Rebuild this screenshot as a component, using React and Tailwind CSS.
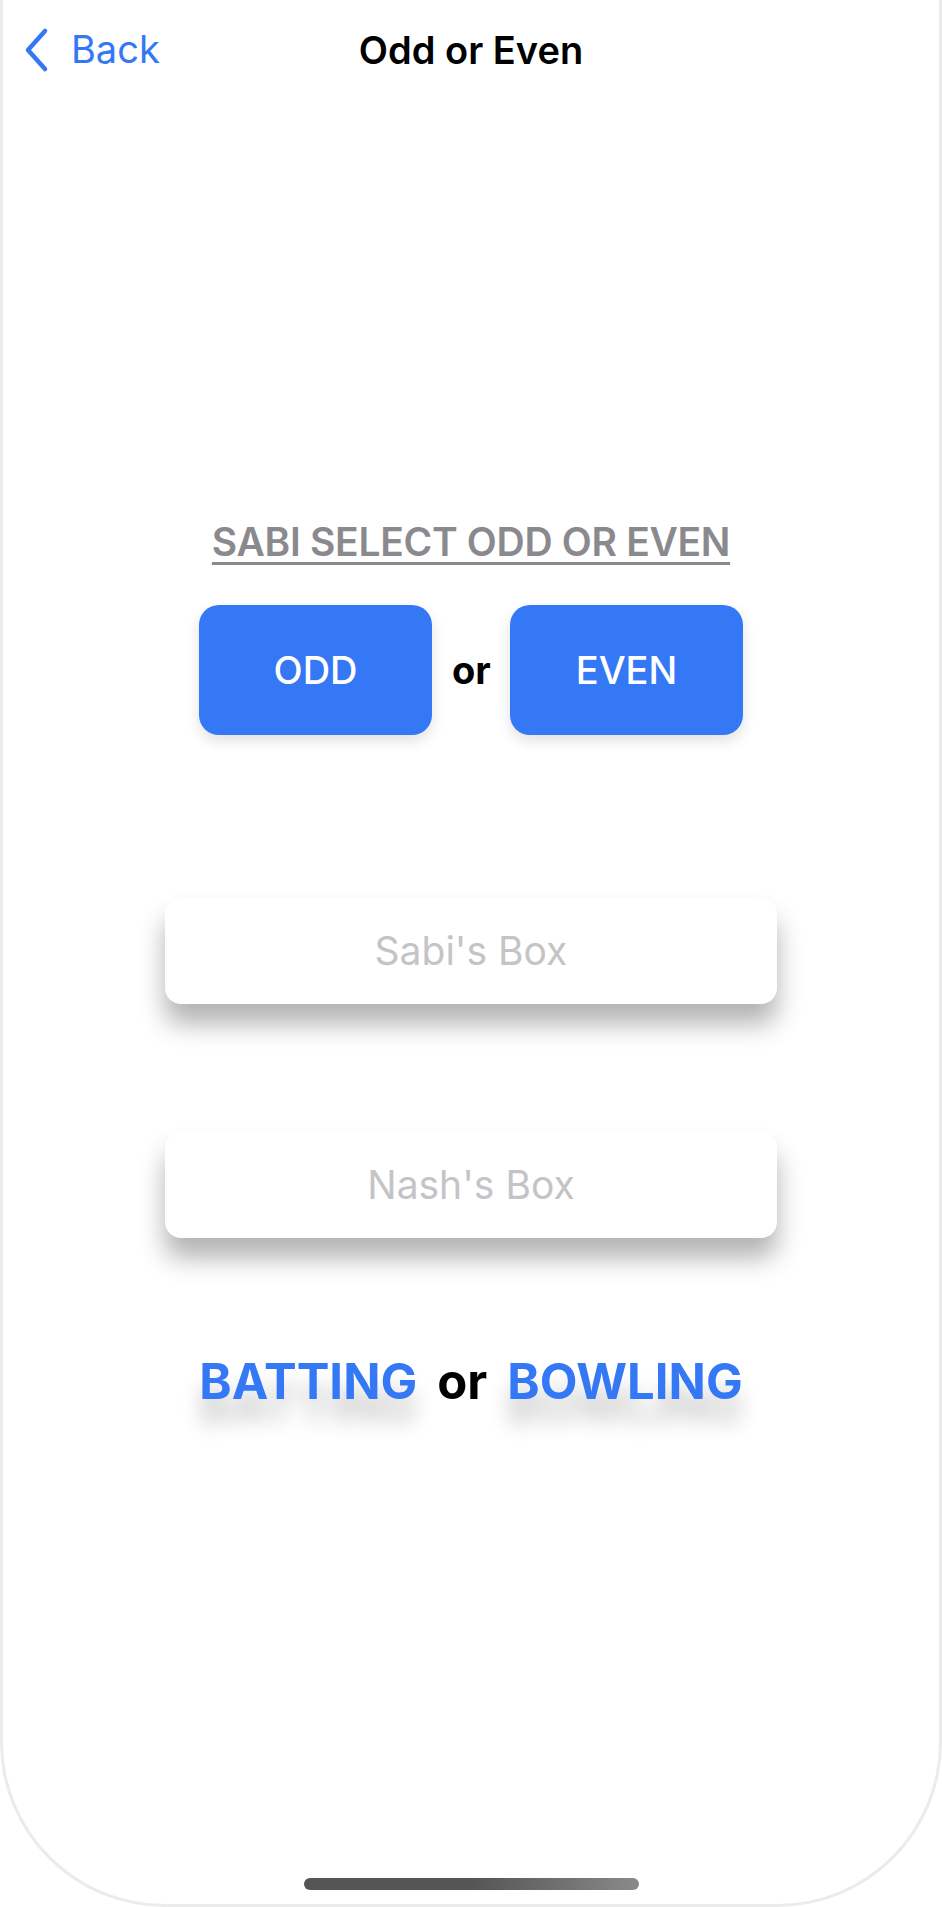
function BackChevron() {
  return (
    <svg width="28" height="46" viewBox="0 0 28 46" fill="none" className="shrink-0">
      <polyline
        points="22,4 5,23 22,42"
        stroke="#3478f6"
        strokeWidth="4.5"
        strokeLinecap="round"
        strokeLinejoin="round"
      />
    </svg>
  )
}

export default function App() {
  return (
    <div
      className="w-[942px] h-[1907px] bg-white flex flex-col border-x-[3px] border-b-[3px] border-[#ebebeb] rounded-b-[165px] overflow-hidden"
      style={{ fontFamily: 'Inter, "Noto Sans", sans-serif' }}
    >
      {/* Nav bar */}
      <div className="grid grid-cols-[1fr_auto_1fr] items-center h-[100px] px-[20px]">
        <button className="flex items-center gap-[20px] text-[#3478f6] text-[38px] leading-none">
          <BackChevron />
          <span className="-mt-[2px]">Back</span>
        </button>
        <h1 className="text-[38px] font-semibold text-black leading-none">Odd or Even</h1>
        <div />
      </div>

      {/* Odd / Even */}
      <div className="flex flex-col items-center mt-[420px]">
        <p className="text-[39px] font-semibold text-[#8a8a8e] underline underline-offset-[6px] decoration-[3px] leading-[44px] tracking-[-0.3px]">
          SABI SELECT ODD OR EVEN
        </p>
        <div className="flex items-center gap-[20px] mt-[41px]">
          <button className="w-[233px] h-[130px] rounded-[20px] bg-[#3478f6] text-white text-[38px] font-medium shadow-[0_6px_14px_rgba(0,0,0,0.12)]">
            ODD
          </button>
          <span className="text-[38px] font-bold text-black w-[38px] text-center">or</span>
          <button className="w-[233px] h-[130px] rounded-[20px] bg-[#3478f6] text-white text-[38px] font-medium shadow-[0_6px_14px_rgba(0,0,0,0.12)]">
            EVEN
          </button>
        </div>
      </div>

      {/* Boxes */}
      <div className="flex flex-col items-center gap-[128px] mt-[163px]">
        <div className="w-[612px] h-[106px] rounded-[16px] bg-white flex items-center justify-center text-[39px] text-[#c4c4c6] shadow-[0_20px_26px_rgba(0,0,0,0.3)]">
          Sabi's Box
        </div>
        <div className="w-[612px] h-[106px] rounded-[16px] bg-white flex items-center justify-center text-[39px] text-[#c4c4c6] shadow-[0_20px_26px_rgba(0,0,0,0.3)]">
          Nash's Box
        </div>
      </div>

      {/* Batting / Bowling */}
      <div className="flex items-center justify-center gap-[20px] mt-[113px] h-[60px] text-[49px] font-bold leading-none">
        <span className="text-[#3478f6] [text-shadow:0_24px_20px_rgba(0,0,0,0.22)]">BATTING</span>
        <span className="text-black">or</span>
        <span className="text-[#3478f6] [text-shadow:0_24px_20px_rgba(0,0,0,0.22)]">BOWLING</span>
      </div>

      {/* Home indicator */}
      <div className="mt-auto flex justify-center pb-[14px]">
        <div className="w-[335px] h-[12px] rounded-full bg-gradient-to-r from-[#555] via-[#555] to-[#8a8a8a]" />
      </div>
    </div>
  )
}
